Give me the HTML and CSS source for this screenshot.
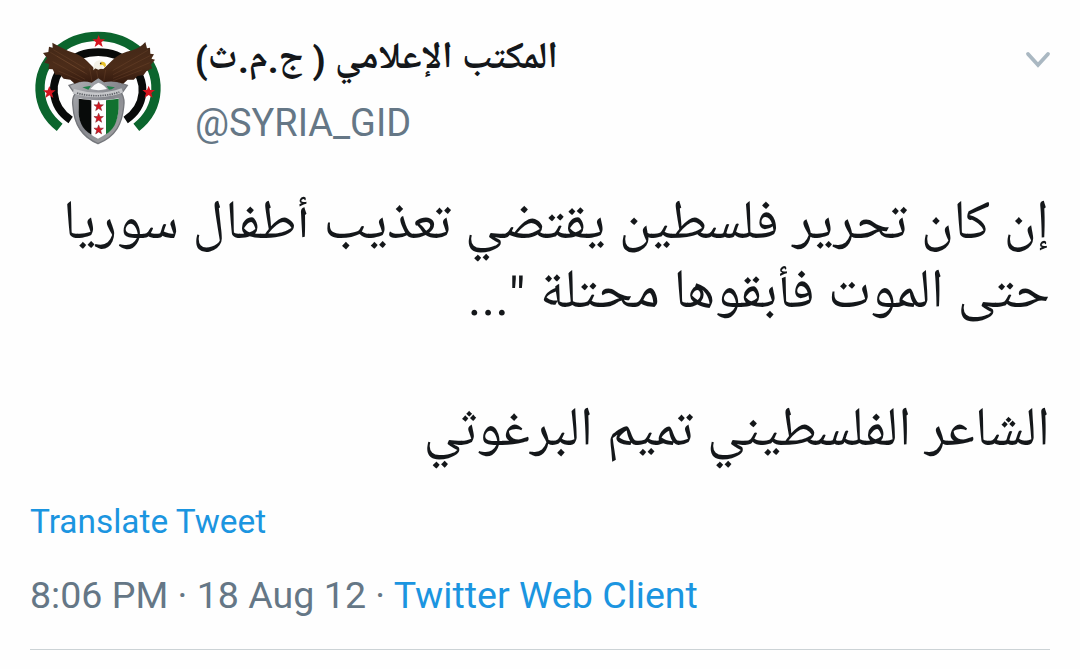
FILE: index.html
```html
<!DOCTYPE html>
<html lang="en">
<head>
<meta charset="utf-8">
<title>Tweet</title>
<link rel="stylesheet" href="styles.css">
</head>
<body>
<article class="tweet">
  <header class="header">
    <svg class="avatar" viewBox="0 0 435 390" aria-label="Emblem">
      <defs>
        <linearGradient id="wing" x1="0" y1="0" x2="0" y2="1"><stop offset="0" stop-color="#432817"/><stop offset=".6" stop-color="#4c2c19"/><stop offset="1" stop-color="#341a0e"/></linearGradient>
        <linearGradient id="steel" x1="0" y1="0" x2="1" y2="1"><stop offset="0" stop-color="#b4b5b9"/><stop offset=".5" stop-color="#85878d"/><stop offset="1" stop-color="#aaa"/></linearGradient>
        <path id="star" d="M0-19 5-6 19-6 8 3 12 17 0 9-12 17-8 3-19-6-5-6Z"/>
      </defs>
      <g fill="none">
        <path d="M104 307A174 156 0 1 1 334 307" stroke="#0b652d" stroke-width="28"/>
        <path d="M137 285A133 114 0 1 1 302 285" stroke="#080a09" stroke-width="23"/>
      </g>
      <path d="M132 181Q178 166 198 161 220 148 242 161 267 168 307 181L290 205Q300 223 296 246C291 295 274 333 219 356C164 333 147 292 144 245Q140 220 150 207Z" fill="url(#steel)" stroke="#75777c" stroke-width="4"/>
      <path d="M161 220Q218 232 281 220V252C276 299 257 323 219 341C181 323 160 296 161 250Z" fill="#fff"/>
      <path d="M161 221 199 226V329C171 314 159 286 161 250Z" fill="#080b0a"/>
      <path d="M243 226 281 221V252C276 297 265 313 243 328Z" fill="#11712f"/>
      <path d="M145 199Q220 222 292 196" fill="none" stroke="#c6c7ca" stroke-width="14"/>
      <path d="M156 204Q220 222 283 201" fill="none" stroke="#5d6066" stroke-width="5" stroke-dasharray="4 3"/>
      <path d="M196 192Q206 178 220 173 236 178 246 192 220 199 196 192Z" fill="#fafafa"/>
      <path d="M172 187 198 182 190 194ZM245 183 270 187 260 193 252 194Z" fill="#21804a"/>
      <path d="M54 84 70 81 72 65 83 68 82 53Q109 68 130 78 168 89 186 108L207 129 235 132 262 106Q287 82 322 76 346 68 361 51L366 70 375 68 376 86 387 88 379 101 390 104 378 119 382 130 364 139 356 150 338 153 326 164 308 164 295 176Q263 165 237 172L220 160 200 173Q171 164 149 176L136 164 116 161 105 149 91 149 83 133 70 132 72 117 58 113 66 99Z" fill="url(#wing)"/>
      <g fill="none" stroke="#9b6846" stroke-width="2" opacity=".3">
        <path d="M76 82 187 148M85 74 180 130M83 110 180 163M95 93 179 143M100 138 173 169M368 76 263 137M375 92 264 149M374 113 264 160M350 135 263 168M194 130 201 169M215 138 219 160M242 135 236 170"/>
      </g>
      <path d="M205 136Q203 108 222 106 236 105 240 116L232 129 220 134 211 130Z" fill="#f4f2e9"/>
      <path d="M229 110Q243 109 243 122L238 127 234 120 224 121Z" fill="#e7c22c"/>
      <circle cx="227" cy="115" r="2.5" fill="#30200d"/>
      <g fill="#d5141f">
        <use href="#star" x="221" y="49"/><use href="#star" x="73" y="202"/><use href="#star" x="371" y="201"/>
        <g stroke="#6e2026" stroke-width="2"><use href="#star" transform="translate(221 244) scale(.75)"/><use href="#star" transform="translate(221 279) scale(.75)"/><use href="#star" transform="translate(221 314) scale(.75)"/></g>
      </g>
    </svg>
    <div class="author">
      <div class="name" dir="rtl" lang="ar">المكتب الإعلامي ( ج.م.ث)</div>
      <div class="handle">@SYRIA_GID</div>
    </div>
    <svg class="chevron" viewBox="0 0 28 20"><path d="M4 4 14 15 24 4" fill="none" stroke="#aab8c2" stroke-width="3.8" stroke-linecap="round"/></svg>
  </header>
  <div class="message" dir="rtl" lang="ar">
    <div class="line">إن كان تحرير فلسطين يقتضي تعذيب أطفال سوريا</div>
    <div class="line">حتى الموت فأبقوها محتلة <span class="punct">"...</span></div>
    <div class="line"></div>
    <div class="line">الشاعر الفلسطيني تميم البرغوثي</div>
  </div>
  <div class="translate">Translate Tweet</div>
  <div class="meta">8:06 PM · 18 Aug 12 · <span class="link">Twitter Web Client</span></div>
</article>
</body>
</html>
```
FILE: styles.css
```css
* { box-sizing: border-box; }
body { margin: 0; background: #fefefe; color: #14171a; font-family: Roboto, "Noto Sans", sans-serif; }
.tweet { width: 1080px; height: 669px; padding: 25px 30px 0 25px; overflow: hidden; }
.header { display: flex; height: 167px; }
.avatar { width: 145px; height: 130px; flex: none; }
.author { margin-left: 25px; flex: 1; }
.name { height: 65px; width: 363px; line-height: 70px; font-family: Roboto, "Noto Naskh Arabic UI", "Noto Naskh Arabic", "DejaVu Sans", sans-serif; font-size: 37.5px; font-weight: 700; white-space: nowrap; }
.handle { font-size: 37.9px; line-height: 66px; color: #657786; }
.chevron { width: 28px; height: 20px; margin: 25px -2px 0 0; }
.message { font-family: Roboto, "Noto Naskh Arabic UI", "Noto Naskh Arabic", "DejaVu Sans", sans-serif; font-size: 55px; }
.line { height: 69px; line-height: 69px; white-space: nowrap; }
.punct { font-size: 52px; line-height: 0; vertical-align: -1px; }
.translate { margin: 34px 0 0 5px; height: 40px; line-height: 40px; font-size: 33.4px; color: #1b95e0; }
.meta { margin-left: 5px; height: 108px; padding-top: 31px; line-height: 44px; font-size: 37.6px; color: #657786; border-bottom: 1px solid #ccd3d6; }
.link { color: #1b95e0; }
```
